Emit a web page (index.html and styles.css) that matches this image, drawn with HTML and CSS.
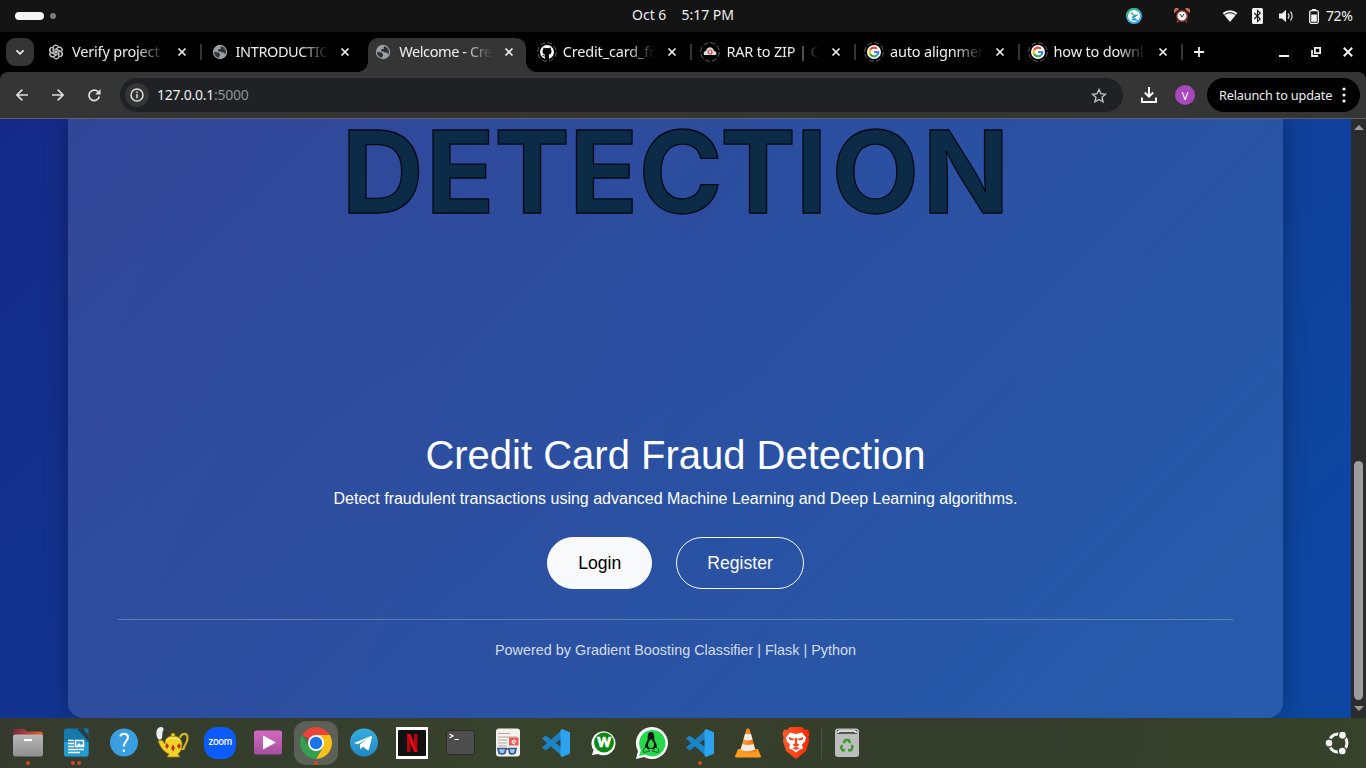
FILE: index.html
```html
<!DOCTYPE html>
<html lang="en">
<head>
<meta charset="utf-8">
<title>Welcome - Credit Card Fraud Detection</title>
<link rel="stylesheet" href="styles.css">
</head>
<body>
<svg class="defs" width="0" height="0" aria-hidden="true">
  <defs>
    <linearGradient id="folderTab"><stop offset="0" stop-color="#7a2644"/><stop offset="1" stop-color="#e8622c"/></linearGradient>
    <linearGradient id="greyFace" x2="0" y2="1"><stop offset="0" stop-color="#b9b9b9"/><stop offset="1" stop-color="#8f8f8f"/></linearGradient>
    <linearGradient id="skyFace" x2="0" y2="1"><stop offset="0" stop-color="#37aee2"/><stop offset="1" stop-color="#1e88c3"/></linearGradient>
    <linearGradient id="pinkFace" x2="0" y2="1"><stop offset="0" stop-color="#d36ac2"/><stop offset="1" stop-color="#a4509f"/></linearGradient>
    <linearGradient id="coneFace"><stop offset="0" stop-color="#ffa63a"/><stop offset="1" stop-color="#ef6c00"/></linearGradient>
    <linearGradient id="lionFace"><stop offset="0" stop-color="#ff5a2a"/><stop offset="1" stop-color="#ff2a00"/></linearGradient>
  </defs>
  <symbol id="close" viewBox="0 0 10 10"><path d="M1.500 1.500l7 7M8.500 1.500l-7 7" stroke="#eee" stroke-width="1.700"/></symbol>
  <symbol id="globe" viewBox="0 0 16 16"><circle cx="8" cy="8" r="7.200" fill="#9aa0a6"/><path d="M2 7.800l4.300.7 1.700 1.400v1.300l-.8 1v1.700C4.200 13.400 2 11 2 7.800zM8.800 2.200c3 .4 5.200 2.800 5.200 5.800 0 1-.2 1.700-.6 2.400l-1.400-1.800H9.800l-1-1.200-2.500.1-.4-1.300 1.200-1.300h1.700z" fill="#303236"/></symbol>
  <symbol id="google" viewBox="0 0 20 20"><circle cx="10" cy="10" r="9.300" fill="none" stroke="#606266" stroke-width="1" stroke-dasharray="5 2.300"/><circle cx="10" cy="10" r="7" fill="#fff"/><g fill="none" stroke-width="2.200"><path d="M6.200 7.800A4.300 4.300 0 0 1 13 6.800" stroke="#ea4335"/><path d="M6.200 7.800a4.300 4.300 0 0 0 0 4.300" stroke="#fbbc05"/><path d="M6.200 12.100a4.300 4.300 0 0 0 6.700 1.100" stroke="#34a853"/><path d="M12.900 13.200A4.300 4.300 0 0 0 14.300 10H10" stroke="#4285f4"/></g></symbol>
  <symbol id="vscode" viewBox="0 0 28 28"><path d="M0 18.500L21 0v8.500L3.500 21.500z" fill="#1c7fc0"/><path d="M0 9.500l3.500-3L21 19.500V28z" fill="#1a86cc"/><path d="M20 0l8 3.300v21.400L20 28l-1.500-1.200V1.200z" fill="#2ba3ee"/></symbol>
</svg>

<header class="topbar">
  <div class="workspaces"><i class="ws-on"></i><i class="ws-dot"></i></div>
  <div class="clock"><span>Oct 6</span><span>5:17 PM</span></div>
  <div class="tray">
    <svg class="t-sync" width="16" height="16" viewBox="0 0 16 16"><circle cx="8" cy="8" r="7" fill="#fff" stroke="#42aeea" stroke-width="2"/><path d="M1 8a7 7 0 0 1 12-5" fill="none" stroke="#2fb574" stroke-width="2"/><path d="M5.500 4l1.200 2.800 3.300.7-4 1.500M10.500 5.500" fill="none" stroke="#2fb574" stroke-width="1.300"/><path d="M11.500 7L7 9.500l3.500 2.500-5-.5" fill="none" stroke="#2298dd" stroke-width="1.300"/></svg>
    <svg class="t-alarm" width="16" height="16" viewBox="0 0 16 16"><path d="M3 14.500l2-3M13 14.500l-2-3" stroke="#a83a28" stroke-width="1.500"/><path d="M.5 5A3 3 0 0 1 5 1zM15.500 5A3 3 0 0 0 11 1z" fill="#ce6b55"/><circle cx="8" cy="8" r="5.300" fill="#f5f5f5" stroke="#8d3323" stroke-width="1.500"/><path d="M6 6l2 3 2-3" fill="none" stroke="#333"/></svg>
    <svg class="t-wifi" width="16" height="14" viewBox="0 0 16 14"><path d="M.6 4a11.200 11.200 0 0 1 14.800 0L8 13z" fill="#f2f2f2"/><path d="M2.400 5.800a8.500 8.500 0 0 1 11.200 0" fill="none" stroke="#161616" stroke-width="1"/></svg>
    <svg class="t-bt" width="11" height="16" viewBox="0 0 11 16"><rect width="11" height="16" rx="1.500" fill="#f2f2f2"/><path d="M2.300 5l6 6-2.800 2.500V2.500L8.300 5l-6 6" fill="none" stroke="#161616" stroke-width="1.100"/></svg>
    <svg class="t-vol" width="15" height="14" viewBox="0 0 15 14"><path d="M0 4.500h3L7 .8v12.400L3 9.500H0z" fill="#f2f2f2"/><path d="M9 4.500q2 2.500 0 5M11.500 2.500q3.300 4.500 0 9" fill="none" stroke="#ccc" stroke-width="1.300"/></svg>
    <svg class="t-bat" width="10" height="15" viewBox="0 0 10 15"><path d="M3 0h4v2H3z" fill="#f2f2f2"/><rect x=".7" y="1.700" width="8.600" height="12.600" rx="1.500" fill="none" stroke="#f2f2f2" stroke-width="1.300"/><path d="M2.200 5.500h5.600v7.300H2.200z" fill="#f2f2f2"/></svg>
    <span class="percent">72%</span>
  </div>
</header>

<nav class="tabstrip">
  <div class="tabsearch"><svg width="10" height="7" viewBox="0 0 10 7"><path d="M1.500 1.300L5 4.800l3.500-3.500" fill="none" stroke="#eee" stroke-width="1.800"/></svg></div>
  <div class="tab sep"><svg class="fav" viewBox="0 0 16 16"><g fill="none" stroke="#ccc" stroke-width="1"><path id="petal" d="M8 8.200V4.700l2.800-1.600c2.600-1 4.500 2 3 4.200M5.200 9.700V4.200C5.400 1.500 8.500.6 10.300 2.500"/><use href="#petal" transform="rotate(60 8 8)"/><use href="#petal" transform="rotate(120 8 8)"/><use href="#petal" transform="rotate(180 8 8)"/><use href="#petal" transform="rotate(240 8 8)"/><use href="#petal" transform="rotate(300 8 8)"/></g></svg><span class="label">Verify project</span><svg class="x"><use href="#close"/></svg></div>
  <div class="tab"><svg class="fav"><use href="#globe"/></svg><span class="label tight">INTRODUCTIO</span><svg class="x"><use href="#close"/></svg></div>
  <div class="tab active"><svg class="fav"><use href="#globe"/></svg><span class="label tight">Welcome - Cre</span><svg class="x"><use href="#close"/></svg></div>
  <div class="tab sep"><svg class="fav ring" viewBox="0 0 20 20"><circle cx="10" cy="10" r="9.300" fill="none" stroke="#606266" stroke-dasharray="5 2.300"/><circle cx="10" cy="10" r="7" fill="#fff"/><path d="M8 17v-2.500c-2 .3-2.300-1.200-3-1.500 1.500-.3 1.700 1 3 .6l.4-.9C6 12.200 5.500 10.700 5.500 9.200c0-.8.300-1.500.8-2-.1-.7 0-1.300.1-1.800.8 0 1.400.4 2 .8a7 7 0 0 1 3.200 0c.6-.4 1.200-.8 2-.8.200.5.200 1.200.100 1.800.5.5.8 1.200.8 2 0 2-1 3.200-2.900 3.500.4.500.4 1 .4 1.700V17z" fill="#000"/></svg><span class="label">Credit_card_fr</span><svg class="x"><use href="#close"/></svg></div>
  <div class="tab sep"><svg class="fav ring" viewBox="0 0 20 20"><circle cx="10" cy="10" r="9.300" fill="none" stroke="#606266" stroke-dasharray="5 2.300"/><path d="M4 13c-1-3 1-4 2-4 1-5 7-5 8 0 2 0 3 2 2 4z" fill="#ddd"/><circle cx="10" cy="10" r="2" fill="none" stroke="#d84744" stroke-width="1.200"/></svg><span class="label">RAR to ZIP | C</span><svg class="x"><use href="#close"/></svg></div>
  <div class="tab sep"><svg class="fav ring"><use href="#google"/></svg><span class="label">auto alignmer</span><svg class="x"><use href="#close"/></svg></div>
  <div class="tab sep"><svg class="fav ring"><use href="#google"/></svg><span class="label">how to downl</span><svg class="x"><use href="#close"/></svg></div>
  <svg class="plus" width="12" height="12" viewBox="0 0 12 12"><path d="M6 1v10M1 6h10" stroke="#eee" stroke-width="1.800"/></svg>
  <div class="winctl">
    <svg width="10" height="12" viewBox="0 0 10 12"><path d="M0 10h10" stroke="#eee" stroke-width="2"/></svg>
    <svg width="10" height="12" viewBox="0 0 10 12"><path d="M3.900 1.900h5.200v5.200H3.900z" fill="none" stroke="#eee" stroke-width="1.800"/><path d="M1 4v6h6" fill="none" stroke="#eee" stroke-width="1.800"/></svg>
    <svg width="10" height="12" viewBox="0 0 10 12"><path d="M.8 1.800l8.400 8.400M9.200 1.800L.8 10.200" stroke="#eee" stroke-width="2"/></svg>
  </div>
</nav>

<div class="toolbar">
  <svg width="12" height="12" viewBox="0 0 12 12"><path d="M12 6H1.200M6.300.7L1 6l5.300 5.300" fill="none" stroke="#ddd" stroke-width="1.700"/></svg>
  <svg width="12" height="12" viewBox="0 0 12 12"><path d="M0 6h10.800M5.700.7L11 6l-5.300 5.300" fill="none" stroke="#ddd" stroke-width="1.700"/></svg>
  <svg width="13" height="13" viewBox="0 0 13 13"><path d="M11.300 7.500a5.200 5.200 0 1 1-1.200-4.600L12 5" fill="none" stroke="#ddd" stroke-width="1.700"/><path d="M12.500 0v5.500H7.200z" fill="#ddd"/></svg>
  <div class="omnibox">
    <span class="info"><svg width="14" height="14" viewBox="0 0 14 14"><circle cx="7" cy="7" r="6" fill="none" stroke="#ddd" stroke-width="1.500"/><path d="M7 6v4.300M7 3.500v1.500" stroke="#ddd" stroke-width="1.500"/></svg></span>
    <span class="url">127.0.0.1<span class="port">:5000</span></span>
    <svg class="star" width="16" height="15" viewBox="0 0 16 15"><path d="M8 1.500l1.900 4.200 4.600.5-3.400 3.100.9 4.500-4-2.300-4 2.300.9-4.500-3.400-3.100 4.600-.5z" fill="none" stroke="#c0c3c7" stroke-width="1.400"/></svg>
  </div>
  <svg class="download" width="16" height="16" viewBox="0 0 16 16"><path d="M8 0v9M3.800 5.500L8 9.700l4.200-4.200M1 10.500V15h14v-4.500" fill="none" stroke="#fff" stroke-width="1.900"/></svg>
  <span class="avatar">V</span>
  <div class="relaunch"><span>Relaunch to update</span><svg width="4" height="16" viewBox="0 0 4 16"><g fill="#fff"><circle cx="2" cy="2" r="1.600"/><circle cx="2" cy="8" r="1.600"/><circle cx="2" cy="14" r="1.600"/></g></svg></div>
</div>

<div class="viewport">
  <main class="page">
    <section class="card">
      <svg class="banner" width="700" height="110" viewBox="0 0 700 110"><text x="15.500 99.500 168 243 312.500 394 469.500 505.500 596.500" y="93.500">DETECTION</text></svg>
      <h1>Credit Card Fraud Detection</h1>
      <p class="lead">Detect fraudulent transactions using advanced Machine Learning and Deep Learning algorithms.</p>
      <div class="actions"><a class="btn solid">Login</a><a class="btn outline">Register</a></div>
      <footer>Powered by Gradient Boosting Classifier | Flask | Python</footer>
    </section>
  </main>
  <div class="scrollbar">
    <svg width="10" height="5" viewBox="0 0 10 5"><path d="M0 5l5-5 5 5z" fill="#9b9b9b"/></svg>
    <i class="thumb"></i>
    <svg width="10" height="5" viewBox="0 0 10 5"><path d="M0 0l5 5 5-5z" fill="#9b9b9b"/></svg>
  </div>
</div>

<div class="dock">
  <div class="app one"><svg width="32" height="32" viewBox="0 0 32 32"><path d="M1 5q0-3 3-3h8l3 2.500h13q3 0 3 3V12H1z" fill="url(#folderTab)"/><rect x="1" y="7.500" width="30" height="22" rx="2.500" fill="url(#greyFace)"/><path d="M12 13h8" stroke="#fff" stroke-width="2"/></svg></div>
  <div class="app two"><svg width="32" height="32" viewBox="0 0 32 32"><path d="M4 4q0-2.500 2.500-2.500H22L28.500 9v18q0 2.500-2.500 2.500H6.500Q4 29.500 4 27z" fill="#1679ad"/><path d="M4 15h24.500v12q0 2.500-2.500 2.500H6.500Q4 29.500 4 27z" fill="#239bd3"/><path d="M17 1.500l11.500 13V9L22 1.500z" fill="#263b46"/><path d="M23 1.500h5.500v6z" fill="#1679ad"/><path d="M8 13.500h6M8 16.500h6M8 19.500h6M8 22.500h16M8 25.500h12" stroke="#fff" stroke-width="1.500"/><path d="M15.500 13.500h8v6h-8z" fill="#239bd3" stroke="#fff" stroke-width="1.500"/><path d="M16 19l3-3 2 2 2-1v2z" fill="#fff"/></svg></div>
  <div class="app"><svg width="32" height="32" viewBox="0 0 32 32"><circle cx="16" cy="15.500" r="14" fill="#3a9fe0"/><path d="M12.200 9.500c1.500-4 8.300-3.200 7.800 1-.3 3.500-4.200 4-4.200 9M15.800 22.500v2.500" fill="none" stroke="#fff" stroke-width="2"/></svg></div>
  <div class="app"><svg width="34" height="34" viewBox="0 0 34 34"><path d="M3 13C0 8 1 1 6 1c3 0 3 3 1.500 5L7 12l-2 2z" fill="#eee"/><path d="M25 12c1-5 8-6 7.500 0 0 5-3 6-4 11h-4" fill="none" stroke="#d3b51d" stroke-width="2.200"/><path d="M3 15l4-1 3 4c-1-11 17-11 17 0 0 6-2 8-4 10l2 3H12l2-3c-5-2-8-6-11-13z" fill="#efd327" stroke="#98780f" stroke-width=".8"/><circle cx="18" cy="9" r="2" fill="#efd327" stroke="#98780f" stroke-width=".8"/><path d="M10 20l2-3 2 3-2 3zM16 22l2-3.500 2 3.500-2 3.500zM22 20l2-3 2 3-2 3z" fill="#c33019"/><path d="M11 14q7-4 14 0" fill="none" stroke="#fff39b"/></svg></div>
  <div class="app"><div class="zoomapp">zoom</div></div>
  <div class="app"><svg width="32" height="32" viewBox="0 0 32 32"><rect x="2" y="3.500" width="28" height="24" rx="2" fill="url(#pinkFace)"/><path d="M11 8.500v14l13-7z" fill="#fff"/></svg></div>
  <div class="app one focus"><svg width="32" height="32" viewBox="0 0 32 32"><path d="M16 16L2.150 8A16 16 0 0 1 29.850 8z" fill="#ea4335"/><path d="M16 8h13.850A16 16 0 0 1 16 32l7-12z" fill="#fbc116"/><path d="M2.150 8A16 16 0 0 0 16 32l6.900-12L16 16 9 20z" fill="#34a04c"/><circle cx="16" cy="16" r="8" fill="#fff"/><circle cx="16" cy="16" r="6.200" fill="#1a73e8"/></svg></div>
  <div class="app"><svg width="32" height="32" viewBox="0 0 32 32"><circle cx="16" cy="15.500" r="14" fill="url(#skyFace)"/><path d="M6 16l17-7c1 0 1 1 .8 1.800L21 22.500c-.3 1-1 1-2 .3l-4-3-3 2.500v-5l8-6-10 6z" fill="#fff"/></svg></div>
  <div class="app"><svg width="32" height="32" viewBox="0 0 32 32"><path d="M0 0h32v32H0z" fill="#fff"/><rect x="2" y="3" width="28" height="26" rx="1" fill="#111"/><path d="M11 7h3.500v18H11zM18 7h3.500v18H18z" fill="#b20710"/><path d="M11 7h3.500L21.500 25H18z" fill="#e50914"/></svg></div>
  <div class="app"><svg width="32" height="32" viewBox="0 0 32 32"><rect x="2.500" y="3.500" width="28" height="24" rx="2.500" fill="#4e4e4e" stroke="#2b2b2b"/><path d="M5.500 7l3.500 2-3.500 2M10.500 12.500H15" fill="none" stroke="#fff" stroke-width="1.200"/></svg></div>
  <div class="app"><svg width="32" height="32" viewBox="0 0 32 32"><rect x="4" y="1.500" width="24" height="28" rx="3" fill="#f3f1ee"/><path d="M6 6.500h12M6 10h19M6 13h9M6 16h9M6 19h9" stroke="#b9aa96" stroke-width="1.200"/><path d="M17 10.500h9.500v8H17z" fill="#ed5b54"/><path d="M20 15h4q0-2-2-2t-2 2 3 2" fill="none" stroke="#fff"/><g fill="#9cc7ee" stroke="#315991" stroke-width="1.700"><path d="M6 21.500h8l-1 4.500q-3 2-6 0zM17 21.500h7l-1 4.500q-3 2-5.500 0zM14 22h3"/></g></svg></div>
  <div class="app"><svg width="28" height="28"><use href="#vscode"/></svg></div>
  <div class="app"><svg width="32" height="32" viewBox="0 0 32 32"><path d="M4 28l1.500-5a12 12 0 1 1 4.500 4z" fill="#fff"/><circle cx="16" cy="15.500" r="10" fill="#0b8913"/><text class="wmark" x="16" y="20">W</text></svg></div>
  <div class="app"><svg width="32" height="32" viewBox="0 0 32 32"><path d="M0 32l2-8a16 16 0 1 1 6 6z" fill="#fff"/><path d="M3 29l2-6a13.200 13.200 0 1 1 4.500 4.500z" fill="#25d94b"/><path d="M15 5c-4 0-3 5-3.500 8-1 3-3 5-2.500 9h12c.5-4-1.500-6-2.500-9C18 10 19 5 15 5z" fill="#151515"/><path d="M15 12c-4 4-4 9 0 9s4-5 0-9z" fill="#25d94b"/><path d="M7 23l3-3 4 4-6 1.500zM23 23l-3-3-4 4 6 1.500z" fill="#25d94b" stroke="#111" stroke-width=".6"/></svg></div>
  <div class="app one"><svg width="28" height="28"><use href="#vscode"/></svg></div>
  <div class="app"><svg width="32" height="32" viewBox="0 0 32 32"><path d="M6 22h20l3 7.500q0 1-1 1H4q-1 0-1-1z" fill="#ff9a20"/><path d="M14.500 2q1.500-1.500 3 0L24 24q-8 4-16 0z" fill="url(#coneFace)"/><path d="M13 7h6l1.500 5.500q-4.500 2-9 0zM10.500 17q5.500 2 11 0l1.700 5.500q-7 3.500-14.500 0z" fill="#ededed"/></svg></div>
  <div class="app"><svg width="32" height="32" viewBox="0 0 32 32"><path d="M10 0h12l3 3 3-.5 1.500 4.500-1 3 .5 4-3 10-5 4-5 4-5-4-5-4-3-10 .5-4-1-3L4 2.500 7 3z" fill="url(#lionFace)"/><path d="M10 5.500l6 1.500 6-1.500 4 5-1 4-3 3 1 4-3 1-4 3-4-3-3-1 1-4-3-3-1-4z" fill="#fff"/><path d="M9 10l5 2-1 1.500-4-1zM23 10l-5 2 1 1.500 4-1zM14.500 11h3l-.5 5 2.500 2-3.500 2-3.500-2 2.500-2zM12 21l4-1 4 1-4 2z" fill="#ff431b"/></svg></div>
  <i class="divider"></i>
  <div class="app trash"><svg width="32" height="32" viewBox="0 0 32 32"><rect x="4" y="1.500" width="24" height="28.500" rx="3" fill="#bdbdbd"/><path d="M6 3h20v4H6z" fill="#555"/><path d="M7 6q0-2 2-2h14q2 0 2 2" fill="none" stroke="#fff" stroke-width="1.600"/><g fill="none" stroke="#3b982c" stroke-width="2.400"><path d="M12.500 16l2-3h3l1.800 3"/><path d="M20.500 18l1.200 2-1.700 3.200h-3"/><path d="M14 23.200h-2.500L10 20.500l1.300-2.300"/></g></svg></div>
  <svg class="ubuntu" width="26" height="26" viewBox="0 0 26 26"><circle cx="13" cy="13" r="9" fill="none" stroke="#f3f3f3" stroke-width="3"/><g fill="#f3f3f3" stroke="#343d2a" stroke-width="1.300"><circle cx="4" cy="13" r="4"/><circle cx="17.500" cy="5.200" r="4"/><circle cx="17.300" cy="21" r="4"/></g></svg>
</div>
</body>
</html>
```
FILE: styles.css
```css
* { box-sizing: border-box; }
body { margin: 0; width: 1366px; height: 768px; overflow: hidden; display: flex; flex-direction: column; background: #000; font-family: "Noto Sans", "Open Sans", sans-serif; color: #eee; }
svg { display: block; flex: none; }
.defs { position: absolute; }

.topbar { height: 32px; flex: none; background: #141414; display: grid; grid-template-columns: 1fr auto 1fr; align-items: center; font-size: 14px; }
.workspaces { display: flex; align-items: center; gap: 6px; padding-left: 15px; }
.ws-on { width: 29px; height: 8px; border-radius: 4px; background: #f5f5f5; }
.ws-dot { width: 6px; height: 6px; border-radius: 50%; background: #7d7d7d; }
.clock { display: flex; gap: 15px; padding-bottom: 3px; }
.tray { display: flex; align-items: center; justify-content: flex-end; padding-right: 12px; }
.t-sync { margin-right: 32px; }
.t-alarm { margin-right: 32px; }
.t-wifi { margin-right: 14px; }
.t-bt { margin-right: 16px; }
.t-vol { margin-right: 15px; }
.t-bat { margin-right: 7px; }
.percent { width: 28px; letter-spacing: -.4px; white-space: nowrap; padding-bottom: 2px; }

.tabstrip { height: 40px; flex: none; display: flex; align-items: center; padding-left: 6px; background: #000; }
.tabsearch { width: 28px; height: 28px; margin-right: 3px; border-radius: 9px; background: #353535; display: grid; place-items: center; }
.tab { position: relative; width: 163.600px; height: 34px; margin-top: 6px; padding: 0 14px 6px 10px; flex: none; display: flex; align-items: center; }
.tab.sep::after { content: ""; position: absolute; right: -1px; top: 6px; width: 2px; height: 16px; background: #353535; }
.tab.active::before { content: ""; position: absolute; z-index: 0; left: 3.500px; right: 2px; top: 0; bottom: 0; background: #353535; border-radius: 10px 10px 0 0; }
.tab.active::after { content: ""; position: absolute; left: -6.500px; right: -8px; bottom: 0; height: 10px; background: radial-gradient(circle at 0 0, transparent 9.500px, #353535 10px) left / 10px 10px no-repeat, radial-gradient(circle at 100% 0, transparent 9.500px, #353535 10px) right / 10px 10px no-repeat; }
.tab > * { position: relative; z-index: 1; }
.fav { width: 16px; height: 16px; margin: 0 8px 0 1px; }
.fav.ring { width: 20px; height: 20px; margin: 0 6px 0 -1px; }
.label { flex: 1; min-width: 0; white-space: nowrap; font-size: 14.500px; line-height: 22px; padding-bottom: 2px; letter-spacing: -.18px; margin-right: 10px; -webkit-mask-image: linear-gradient(90deg, #000 68%, transparent 98%); mask-image: linear-gradient(90deg, #000 68%, transparent 98%); }
.label.tight { letter-spacing: -.4px; }
.x { width: 10px; height: 10px; }
.plus { margin-left: 11px; }
.winctl { display: flex; gap: 22px; margin-left: auto; padding-right: 13px; }

.toolbar { height: 47px; flex: none; display: flex; align-items: center; background: #353535; border-bottom: 1px solid #606060; border-radius: 8px 8px 0 0; padding: 0 6px 0 16px; }
.toolbar > svg { margin-right: 24px; }
.toolbar > svg:nth-of-type(3) { margin-right: 19px; }
.omnibox { width: 1003px; height: 34px; border-radius: 17px; background: #202124; display: flex; align-items: center; padding: 0 16px 0 5px; }
.info { width: 24px; height: 24px; border-radius: 50%; background: #353535; display: grid; place-items: center; margin-right: 8px; }
.url { font-size: 14px; letter-spacing: -.25px; padding-bottom: 2px; }
.port { color: #8e9196; }
.star { margin-left: auto; }
.toolbar > .download { margin: 0 18px; }
.avatar { width: 20px; height: 20px; border-radius: 50%; background: #a947bd; font-size: 11px; display: grid; place-items: center; color: #fff; }
.relaunch { margin-left: auto; width: 153px; height: 34px; border-radius: 17px; background: #000; display: flex; align-items: center; justify-content: space-between; padding: 0 14px 0 12px; font-size: 12.700px; white-space: nowrap; letter-spacing: -.17px; }

.viewport { height: 599px; flex: none; display: flex; }
.page { width: 1351px; height: 599px; padding: 0 68px; overflow: hidden; background: linear-gradient(135deg, #152a88 0%, #0d47a1 90%); font-family: "Liberation Sans", Arial, sans-serif; }
.card { width: 1215px; height: 599px; padding: 0 50px; display: flex; flex-direction: column; align-items: center; background: linear-gradient(110deg, rgba(255,255,255,.125), rgba(255,255,255,.11) 55%); border-radius: 0 0 15px 15px; box-shadow: 0 0 25px rgba(0,0,0,.3); color: #fff; }
.banner { overflow: visible; }
.banner text { font-family: Inter, sans-serif; font-weight: 700; font-size: 114px; fill: #0b2b47; stroke: #020813; stroke-width: 1.300px; }
h1 { margin: 202px 0 0; font-size: 40px; font-weight: 400; line-height: 48px; }
.lead { margin: 8px 0 0; font-size: 16px; line-height: 24px; }
.actions { display: flex; gap: 24px; margin-top: 26px; }
.btn { height: 52px; padding: 0 30px; border: 1px solid #f8f9fa; border-radius: 26px; font-size: 17.600px; line-height: 50px; color: #f8f9fa; }
.btn.solid { background: #f8f9fa; color: #000; }
footer { margin-top: 30px; width: 1115px; border-top: 1px solid rgba(255,255,255,.25); padding-top: 19px; text-align: center; font-size: 14.400px; line-height: 22px; color: rgba(255,255,255,.8); }
.scrollbar { width: 15px; background: #2c2c2c; display: flex; flex-direction: column; align-items: center; padding: 6px 0 7px; }
.thumb { width: 9px; height: 239px; margin: auto 0 6px; background: #9d9d9d; border-radius: 5px; }

.dock { height: 50px; flex: none; display: flex; align-items: center; padding-left: 4px; background: linear-gradient(100deg, #343b2e, #37422b 40%, #343c2b 70%, #36422a); }
.app { position: relative; width: 48px; height: 50px; display: grid; place-items: center; flex: none; }
.app > * { position: relative; }
.one::after, .two::after { content: ""; position: absolute; left: 22px; top: 43px; width: 4px; height: 4px; border-radius: 50%; background: #d64a18; }
.two::after { left: 19px; box-shadow: 6px 0 #d64a18; }
.focus::before { content: ""; position: absolute; left: 2px; top: 3px; width: 44px; height: 44px; border-radius: 12px; background: #5b6156; }
.zoomapp { width: 32px; height: 32px; border-radius: 13px; background: #0b5cff; color: #fff; font: 500 9.500px/30px Inter, sans-serif; letter-spacing: -.4px; text-align: center; }
.wmark { font: 900 13px Lato, sans-serif; fill: #fff; stroke: #fff; stroke-width: .7px; text-anchor: middle; }
.divider { width: 1px; height: 32px; margin: 0 0 0 1px; background: #4a5046; }
.trash { margin-left: 1px; }
.ubuntu { margin: 0 15px 0 auto; }
```
